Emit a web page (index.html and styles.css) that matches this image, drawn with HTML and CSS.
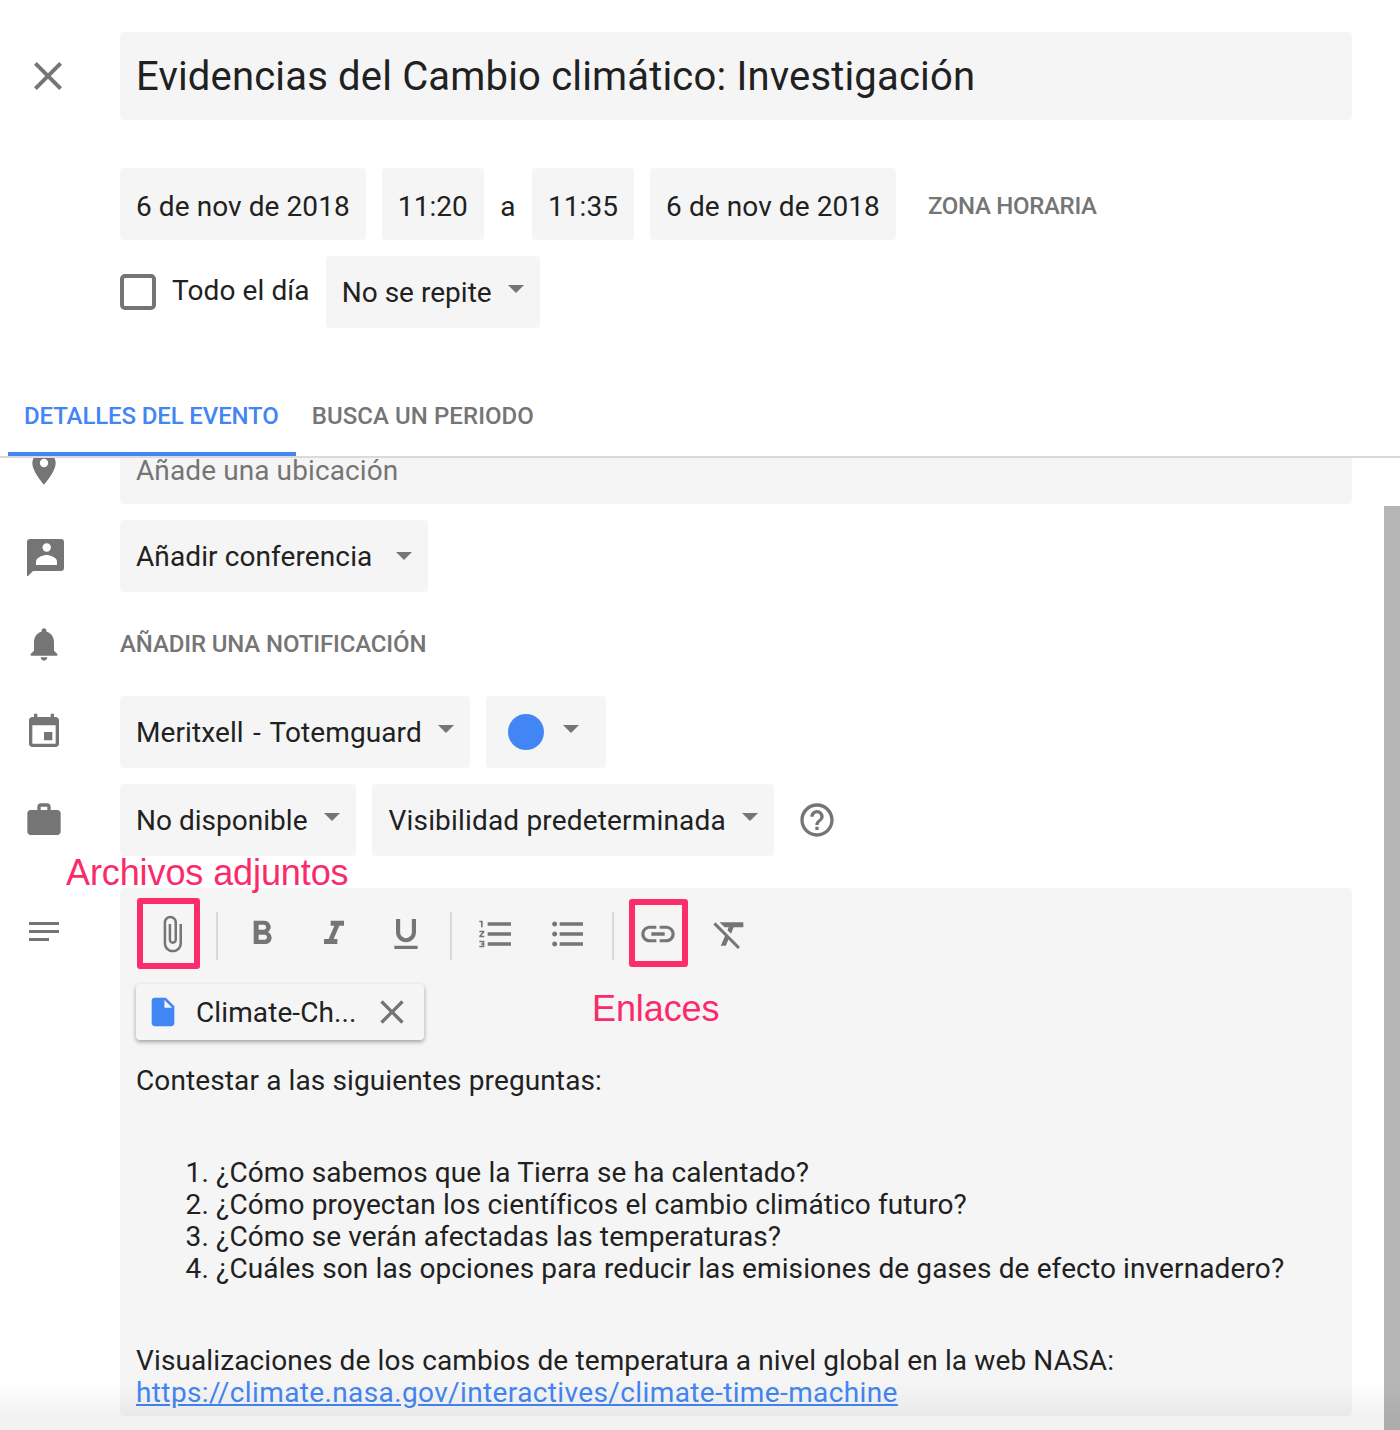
FILE: index.html
```html
<!DOCTYPE html>
<html lang="es">
<head>
<meta charset="UTF-8" />
<meta name="viewport" content="width=device-width, initial-scale=1" />
<title>Evidencias del Cambio climático: Investigación</title>
<link rel="stylesheet" href="styles.css">
</head>
<body>
<div class="page">

    <!-- TITLE -->
    <div class="title-row">
        <div class="icon-col">
            <svg class="icon" viewBox="0 0 24 24" width="48" height="48"><path d="M19 6.41L17.59 5 12 10.59 6.41 5 5 6.41 10.59 12 5 17.59 6.41 19 12 13.41 17.59 19 19 17.59 13.41 12z"/></svg>
        </div>
        <div class="title-field">Evidencias del Cambio climático: Investigación</div>
    </div>

    <!-- DATES -->
    <div class="date-row">
        <div class="chip date-chip">6 de nov de 2018</div>
        <div class="chip date-chip">11:20</div>
        <span class="date-sep">a</span>
        <div class="chip date-chip">11:35</div>
        <div class="chip date-chip">6 de nov de 2018</div>
        <span class="link-btn tz-btn">ZONA HORARIA</span>
    </div>
    <div class="date-row second">
        <span class="checkbox"></span>
        <span class="all-day">Todo el día</span>
        <div class="chip tight">No se repite<i class="caret up"></i></div>
    </div>

    <!-- TABS -->
    <div class="tabs">
        <div class="tab active">DETALLES DEL EVENTO</div>
        <div class="tab second-tab">BUSCA UN PERIODO</div>
    </div>

    <!-- DETAILS, scrolled a little -->
    <div class="scroller">
        <div class="details">
            <div class="row">
                <div class="icon-col">
                    <svg class="icon" viewBox="0 0 24 24" width="40" height="40"><path d="M12 2C8.13 2 5 5.13 5 9c0 5.25 7 13 7 13s7-7.75 7-13c0-3.87-3.13-7-7-7zm0 9.5a2.5 2.5 0 010-5 2.5 2.5 0 010 5z"/></svg>
                </div>
                <div class="chip wide muted">Añade una ubicación</div>
            </div>
            <div class="row">
                <div class="icon-col">
                    <svg class="icon" viewBox="0 0 40 40" width="40" height="40"><path d="M6 3h31a3 3 0 0 1 3 3v26a3 3 0 0 1-3 3H9l-6 6V6a3 3 0 0 1 3-3z"/><circle cx="22.7" cy="11.5" r="4.2" fill="#fff"/><path fill="#fff" d="M12 29v-3.500c0-4 7-6.500 10.500-6.500S33 21.500 33 25.500V29z"/></svg>
                </div>
                <div class="chip">Añadir conferencia<i class="caret wide-gap"></i></div>
            </div>
            <div class="row">
                <div class="icon-col">
                    <svg class="icon" viewBox="0 0 24 24" width="40" height="40"><path d="M12 22c1.100 0 2-.9 2-2h-4c0 1.100.89 2 2 2zm6-6v-5c0-3.070-1.640-5.640-4.500-6.320V4c0-.83-.67-1.500-1.500-1.500s-1.500.67-1.500 1.500v.68C7.630 5.360 6 7.920 6 11v5l-2 2v1h16v-1l-2-2z"/></svg>
                </div>
                <span class="link-btn">AÑADIR UNA NOTIFICACIÓN</span>
            </div>
            <div class="row">
                <div class="icon-col">
                    <svg class="icon" viewBox="0 0 24 24" width="40" height="40"><path d="M17 12h-5v5h5v-5zM16 1v2H8V1H6v2H5c-1.110 0-1.990.9-1.990 2L3 19c0 1.100.89 2 2 2h14c1.100 0 2-.9 2-2V5c0-1.100-.9-2-2-2h-1V1h-2zm3 18H5V8h14v11z"/></svg>
                </div>
                <div class="chip calendar-chip">Meritxell - Totemguard<i class="caret up"></i></div>
                <div class="chip color-chip"><span class="color-dot"></span><i class="caret up"></i></div>
            </div>
            <div class="row">
                <div class="icon-col">
                    <svg class="icon" viewBox="0 0 24 24" width="40" height="40"><path d="M20 6h-4V4c0-1.110-.89-2-2-2h-4c-1.110 0-2 .89-2 2v2H4c-1.110 0-1.990.89-1.990 2L2 19c0 1.110.89 2 2 2h16c1.110 0 2-.89 2-2V8c0-1.110-.89-2-2-2zm-6 0h-4V4h4v2z"/></svg>
                </div>
                <div class="chip tight">No disponible<i class="caret up"></i></div>
                <div class="chip loose">Visibilidad predeterminada<i class="caret up"></i></div>
                <svg class="icon help" viewBox="0 0 24 24" width="40" height="40"><path d="M11 18h2v-2h-2v2zm1-16C6.480 2 2 6.480 2 12s4.480 10 10 10 10-4.480 10-10S17.520 2 12 2zm0 18c-4.410 0-8-3.590-8-8s3.590-8 8-8 8 3.590 8 8-3.590 8-8 8zm0-14c-2.210 0-4 1.790-4 4h2c0-1.100.9-2 2-2s2 .9 2 2c0 2-3 1.750-3 5h2c0-2.250 3-2.500 3-5 0-2.210-1.790-4-4-4z"/></svg>
            </div>

            <div class="row desc-row">
                <div class="icon-col">
                    <svg class="icon notes" viewBox="0 0 40 40" width="40" height="40"><path d="M5 10h30v3H5zM5 18h30v3H5zM5 26h20v3H5z"/></svg>
                </div>
                <div class="editor">
                    <div class="toolbar">
                        <span class="tool"><svg class="icon" viewBox="0 0 24 24" width="40" height="40"><path d="M16.500 6v11.500c0 2.210-1.790 4-4 4s-4-1.790-4-4V5c0-1.380 1.120-2.500 2.500-2.500s2.500 1.120 2.500 2.500v10.500c0 .55-.45 1-1 1s-1-.45-1-1V6H10v9.500c0 1.380 1.120 2.500 2.500 2.500s2.500-1.120 2.500-2.500V5c0-2.210-1.790-4-4-4S7 2.790 7 5v12.500c0 3.040 2.460 5.500 5.500 5.500s5.500-2.460 5.500-5.500V6h-1.500z"/></svg></span>
                        <span class="tool-sep"></span>
                        <span class="tool"><svg class="icon" viewBox="0 0 24 24" width="40" height="40"><path d="M15.600 10.790c.97-.67 1.650-1.770 1.650-2.790 0-2.260-1.750-4-4-4H7v14h7.040c2.090 0 3.710-1.700 3.710-3.790 0-1.520-.86-2.820-2.150-3.420zM10 6.500h3c.83 0 1.500.67 1.500 1.500s-.67 1.500-1.500 1.500h-3v-3zm3.500 9H10v-3h3.500c.83 0 1.500.67 1.500 1.500s-.67 1.500-1.500 1.500z"/></svg></span>
                        <span class="tool"><svg class="icon" viewBox="0 0 24 24" width="40" height="40"><path d="M10 4v3h2.210l-3.420 8H6v3h8v-3h-2.210l3.420-8H18V4z"/></svg></span>
                        <span class="tool"><svg class="icon" viewBox="0 0 24 24" width="40" height="40"><path d="M12 17c3.310 0 6-2.690 6-6V3h-2.500v8c0 1.930-1.570 3.500-3.500 3.500S8.500 12.930 8.500 11V3H6v8c0 3.310 2.690 6 6 6zm-7 2v2h14v-2H5z"/></svg></span>
                        <span class="tool-sep"></span>
                        <span class="tool"><svg class="icon" viewBox="0 0 24 24" width="40" height="40"><path d="M2 17h2v.5H3v1h1v.5H2v1h3v-4H2zm1-9h1V4H2v1h1v3zm-1 3h1.800L2 13.100v.9h3v-1H3.200L5 10.900V10H2v1zm5-6v2h14V5H7zm0 14h14v-2H7v2zm0-6h14v-2H7v2z"/></svg></span>
                        <span class="tool"><svg class="icon" viewBox="0 0 24 24" width="40" height="40"><path d="M4 10.500c-.83 0-1.500.67-1.500 1.500s.67 1.500 1.500 1.500 1.500-.67 1.500-1.500-.67-1.500-1.500-1.500zm0-6c-.83 0-1.500.67-1.500 1.500S3.170 7.500 4 7.500 5.500 6.830 5.500 6 4.830 4.500 4 4.500zm0 12c-.83 0-1.500.68-1.500 1.500s.68 1.500 1.500 1.500 1.500-.68 1.500-1.500-.67-1.500-1.500-1.500zM7 19h14v-2H7v2zm0-6h14v-2H7v2zm0-8v2h14V5H7z"/></svg></span>
                        <span class="tool-sep"></span>
                        <span class="tool"><svg class="icon" viewBox="0 0 24 24" width="40" height="40"><path d="M3.900 12c0-1.710 1.390-3.100 3.100-3.100h4V7H7c-2.760 0-5 2.240-5 5s2.240 5 5 5h4v-1.900H7c-1.710 0-3.100-1.390-3.100-3.100zM8 13h8v-2H8v2zm9-6h-4v1.900h4c1.710 0 3.100 1.390 3.100 3.100s-1.390 3.100-3.100 3.100h-4V17h4c2.760 0 5-2.240 5-5s-2.240-5-5-5z"/></svg></span>
                        <span class="tool"><svg class="icon" viewBox="0 0 24 24" width="40" height="40"><path d="M3.270 5L2 6.270l6.970 6.970L6.500 19h3l1.570-3.660L16.730 21 18 19.730 3.550 5.270 3.270 5zM6 5v.18L8.820 8h2.400l-.72 1.680 2.100 2.100L14.210 8H20V5H6z"/></svg></span>
                    </div>

                    <div class="attachment">
                        <svg class="file-icon" viewBox="0 0 24 24" width="34" height="34"><path d="M6 2c-1.100 0-1.990.9-1.990 2L4 20c0 1.100.89 2 2 2h12c1.100 0 2-.9 2-2V8l-6-6H6zm7 7V3.500L18.500 9H13z"/></svg>
                        <span class="file-name">Climate-Ch...</span>
                        <svg class="icon" viewBox="0 0 24 24" width="40" height="40"><path d="M19 6.410L17.590 5 12 10.590 6.410 5 5 6.410 10.590 12 5 17.590 6.410 19 12 13.410 17.590 19 19 17.590 13.410 12z"/></svg>
                    </div>

                    <div class="desc">
                        <p>Contestar a las siguientes preguntas:</p>
                        <ol>
                            <li>¿Cómo sabemos que la Tierra se ha calentado?</li>
                            <li>¿Cómo proyectan los científicos el cambio climático futuro?</li>
                            <li>¿Cómo se verán afectadas las temperaturas?</li>
                            <li>¿Cuáles son las opciones para reducir las emisiones de gases de efecto invernadero?</li>
                        </ol>
                        <p>Visualizaciones de los cambios de temperatura a nivel global en la web NASA:<br>
                        <a href="#">https://climate.nasa.gov/interactives/climate-time-machine</a></p>
                    </div>
                </div>
            </div>
        </div>
    </div>

    <!-- OVERLAYS -->
    <div class="scrollbar"></div>
    <div class="bottom-fade"></div>
    <div class="note note-files">Archivos adjuntos</div>
    <div class="note note-links">Enlaces</div>
    <div class="mark mark-files"></div>
    <div class="mark mark-links"></div>
</div>
</body>
</html>
```

FILE: styles.css
```css
* { margin: 0; padding: 0; box-sizing: border-box; }

body {
    background: #fff;
    color: #212121;
    font-family: Roboto, sans-serif;
    font-size: 28px;
    letter-spacing: 0.1px;
}

.page {
    position: relative;
    width: 1400px;
    height: 1430px;
    overflow: hidden;
}

.icon { fill: #757575; display: block; flex: none; }

.icon-col {
    width: 120px;
    flex: none;
    padding-left: 24px;
}

/* title */
.title-row {
    display: flex;
    align-items: center;
    padding-top: 32px;
    padding-right: 48px;
}

.title-field {
    flex: 1;
    height: 88px;
    line-height: 90px;
    padding: 0 16px;
    font-size: 40px;
    letter-spacing: 0.17px;
    background: #f5f5f5;
    border-radius: 4px;
}

/* chips */
.chip {
    display: flex;
    align-items: center;
    height: 72px;
    padding: 0 16px;
    background: #f5f5f5;
    border-radius: 4px;
    white-space: nowrap;
}

.chip.wide { flex: 1; }
.chip.tight { letter-spacing: 0.02px; }

.chip.loose {
    padding-left: 17px;
    letter-spacing: 0.17px;
}

.chip.muted {
    color: #757575;
    line-height: 24px;
    padding-top: 6px;
}

.date-chip {
    padding-top: 4px;
    letter-spacing: 0.08px;
}

.calendar-chip {
    letter-spacing: 0.1px;
    word-spacing: 2.2px;
}

.caret {
    width: 0;
    height: 0;
    margin-left: 16px;
    border-left: 8px solid transparent;
    border-right: 8px solid transparent;
    border-top: 8px solid #757575;
}

.caret.up { margin-bottom: 6px; }
.caret.wide-gap { margin-left: 24px; }

.link-btn {
    font-size: 24px;
    font-weight: 500;
    letter-spacing: -0.13px;
    color: #757575;
}

/* date rows */
.date-row {
    display: flex;
    align-items: center;
    gap: 16px;
    margin-top: 48px;
    padding-left: 120px;
}

.date-row.second { margin-top: 16px; }

.date-sep {
    width: 16px;
    padding-top: 4px;
    text-align: center;
}

.tz-btn {
    margin: 4px 0 0 16px;
    letter-spacing: -0.3px;
}

.checkbox {
    width: 36px;
    height: 36px;
    border: 4px solid #757575;
    border-radius: 5px;
}

.all-day { margin-bottom: 4px; }

/* tabs */
.tabs {
    display: flex;
    margin-top: 48px;
    padding-left: 8px;
    border-bottom: 2px solid #dadada;
    font-size: 24px;
    font-weight: 500;
    letter-spacing: -0.13px;
    color: #757575;
}

.tab {
    height: 80px;
    padding: 4px 16px 0;
    line-height: 72px;
    border-bottom: 4px solid transparent;
}

.tab.active {
    padding-right: 17px;
    color: #4285f4;
    border-bottom-color: #4285f4;
}

.second-tab { letter-spacing: 0.07px; }

/* details */
.scroller {
    height: 972px;
    overflow: hidden;
}

.details { margin-top: -26px; }

.row {
    display: flex;
    align-items: center;
    gap: 16px;
    min-height: 72px;
    margin-bottom: 16px;
    padding-right: 48px;
}

.row .icon-col { margin-right: -16px; }

.color-chip { padding: 0 27px 0 22px; }
.color-chip .caret { margin-left: 19px; }

.color-dot {
    width: 36px;
    height: 36px;
    border-radius: 50%;
    background: #4285f4;
}

.help { margin-left: 7px; }

/* description */
.desc-row {
    align-items: flex-start;
    margin-top: 32px;
}

.notes { margin-top: 24px; }

.editor {
    flex: 1;
    height: 528px;
    padding: 0 16px;
    background: #f5f5f5;
    border-radius: 4px;
}

.toolbar {
    display: flex;
    padding-top: 24px;
}

.tool {
    display: flex;
    justify-content: center;
    width: 72px;
    height: 44px;
    padding-top: 2px;
}

.tool-sep {
    width: 2px;
    height: 48px;
    margin: 0 8px;
    background: #dadada;
}

.attachment {
    display: flex;
    align-items: center;
    width: 288px;
    height: 56px;
    margin-top: 24px;
    padding-left: 10px;
    background: #f5f5f5;
    border-radius: 4px;
    box-shadow: 0 2px 4px rgba(0, 0, 0, 0.35);
}

.file-icon { fill: #4285f4; flex: none; }

.file-name {
    width: 160px;
    margin: 0 16px;
    white-space: nowrap;
}

.desc {
    margin-top: 25px;
    line-height: 32px;
    letter-spacing: 0.12px;
}

.desc ol {
    margin: 60px 0;
    padding-left: 80px;
}

.desc a {
    color: #4285f4;
    letter-spacing: 0.38px;
}

/* overlays */
.scrollbar {
    position: absolute;
    left: 1384px;
    top: 506px;
    width: 16px;
    bottom: 0;
    background: #b6b6b6;
}

.bottom-fade {
    position: absolute;
    left: 0;
    right: 0;
    bottom: 0;
    height: 48px;
    background: linear-gradient(rgba(0, 0, 0, 0), rgba(0, 0, 0, 0.05) 75%);
}

.note {
    position: absolute;
    font-family: "Liberation Sans", sans-serif;
    font-size: 36px;
    letter-spacing: -0.1px;
    color: #f92b6b;
}

.note-files { left: 66px; top: 852px; }
.note-links { left: 592px; top: 988px; }

.mark {
    position: absolute;
    border: 6px solid #fb2d6c;
    border-radius: 3px;
}

.mark-files { left: 137px; top: 898px; width: 63px; height: 71px; }
.mark-links { left: 629px; top: 899px; width: 59px; height: 68px; }
```
